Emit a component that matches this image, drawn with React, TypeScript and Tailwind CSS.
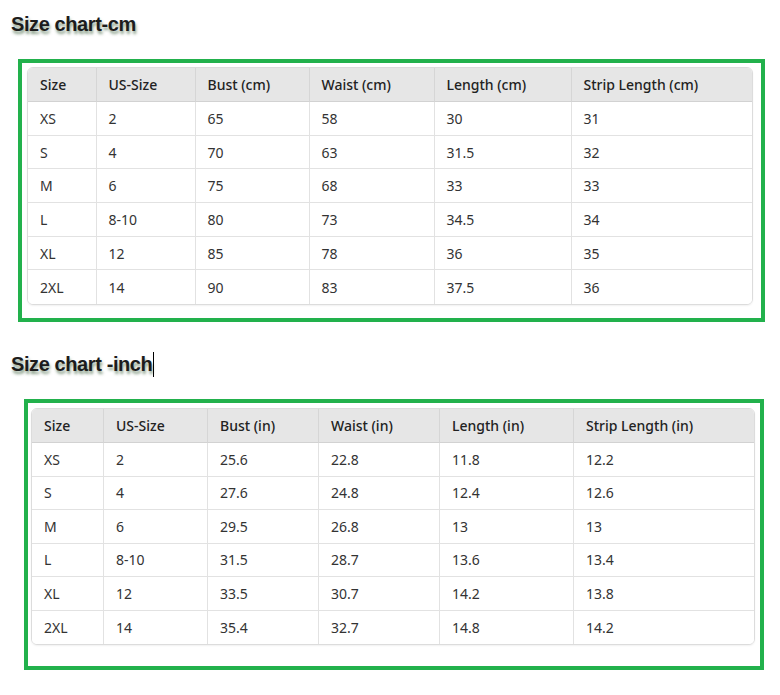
const HEAD_CM = ["Size", "US-Size", "Bust (cm)", "Waist (cm)", "Length (cm)", "Strip Length (cm)"];
const ROWS_CM = [
  ["XS", "2", "65", "58", "30", "31"],
  ["S", "4", "70", "63", "31.5", "32"],
  ["M", "6", "75", "68", "33", "33"],
  ["L", "8-10", "80", "73", "34.5", "34"],
  ["XL", "12", "85", "78", "36", "35"],
  ["2XL", "14", "90", "83", "37.5", "36"],
];

const HEAD_IN = ["Size", "US-Size", "Bust (in)", "Waist (in)", "Length (in)", "Strip Length (in)"];
const ROWS_IN = [
  ["XS", "2", "25.6", "22.8", "11.8", "12.2"],
  ["S", "4", "27.6", "24.8", "12.4", "12.6"],
  ["M", "6", "29.5", "26.8", "13", "13"],
  ["L", "8-10", "31.5", "28.7", "13.6", "13.4"],
  ["XL", "12", "33.5", "30.7", "14.2", "13.8"],
  ["2XL", "14", "35.4", "32.7", "14.8", "14.2"],
];

function SizeTable({
  head,
  rows,
  widths,
  rowH,
}: {
  head: string[];
  rows: string[][];
  widths: number[];
  rowH: number;
}) {
  const total = widths.reduce((a, b) => a + b, 0);
  return (
    <div
      className="rounded-[6px] border border-[#dcdcdc] overflow-hidden shadow-[0_1px_2px_rgba(0,0,0,0.06)]"
      style={{ width: total }}
    >
      <table className="w-full table-fixed border-separate border-spacing-0 text-[14px] font-['Noto_Sans',sans-serif]">
        <colgroup>
          {widths.map((w, i) => (
            <col key={i} style={{ width: w }} />
          ))}
        </colgroup>
        <thead>
          <tr className="h-[34px] bg-[#e6e6e6]">
            {head.map((h, i) => (
              <th
                key={h}
                className={
                  "text-left font-medium text-[#222] pl-[12px] border-b border-[#d2d2d2] " +
                  (i < head.length - 1 ? "border-r border-r-[#d6d6d6]" : "")
                }
              >
                {h}
              </th>
            ))}
          </tr>
        </thead>
        <tbody>
          {rows.map((r, ri) => (
            <tr key={ri} className="bg-white" style={{ height: rowH }}>
              {r.map((c, ci) => (
                <td
                  key={ci}
                  className={
                    "pl-[12px] text-[#333] " +
                    (ri < rows.length - 1 ? "border-b border-[#e2e2e2] " : "") +
                    (ci < r.length - 1 ? "border-r border-r-[#e2e2e2]" : "")
                  }
                >
                  {c}
                </td>
              ))}
            </tr>
          ))}
        </tbody>
      </table>
    </div>
  );
}

export default function App() {
  return (
    <div className="w-[780px] h-[695px] bg-white overflow-hidden">
      <h2 className="pt-[12px] pl-[11px] h-[36px] text-[20px] leading-[24px] font-bold tracking-[-0.4px] text-[#1c1c1c] font-['Liberation_Sans',Arial,sans-serif] [text-shadow:1px_3px_3px_rgba(40,80,40,0.55)]">
        Size chart-cm
      </h2>

      <div className="mt-[23px] ml-[18px] w-[747px] border-4 border-[#22b14c] pt-[4px] pl-[5px] pb-[13px]">
        <SizeTable head={HEAD_CM} rows={ROWS_CM} widths={[68.5, 99, 114, 125, 137, 182.5]} rowH={33.7} />
      </div>

      <h2 className="mt-[30px] pl-[11px] h-[24px] flex items-center text-[20px] leading-[24px] font-bold tracking-[-0.4px] text-[#1c1c1c] font-['Liberation_Sans',Arial,sans-serif] [text-shadow:1px_3px_3px_rgba(40,80,40,0.55)]">
        Size chart -inch
        <span className="inline-block w-px h-[25px] bg-black ml-[1px]" />
      </h2>

      <div className="mt-[23px] ml-[24px] w-[740px] border-4 border-[#22b14c] pt-[5px] pl-[3px] pb-[21px]">
        <SizeTable head={HEAD_IN} rows={ROWS_IN} widths={[72, 104, 111, 121, 134, 182]} rowH={33.5} />
      </div>
    </div>
  );
}
